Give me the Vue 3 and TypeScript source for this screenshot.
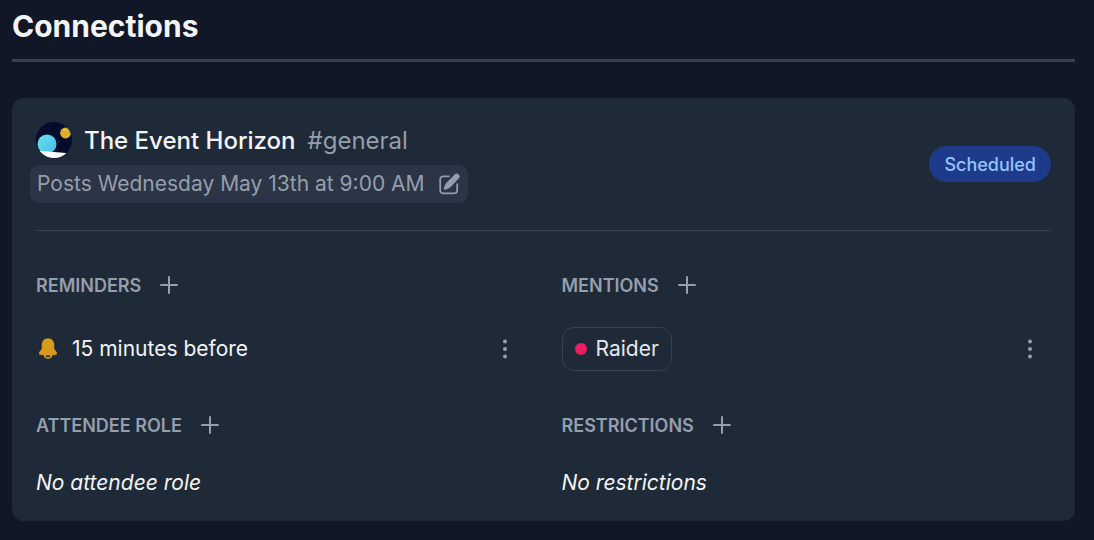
<script setup lang="ts">
interface Section {
  id: string
  title: string
  kind: 'reminder' | 'mention' | 'empty'
  text: string
}

const sections: Section[] = [
  { id: 'reminders', title: 'REMINDERS', kind: 'reminder', text: '15 minutes before' },
  { id: 'mentions', title: 'MENTIONS', kind: 'mention', text: 'Raider' },
  { id: 'attendee-role', title: 'ATTENDEE ROLE', kind: 'empty', text: 'No attendee role' },
  { id: 'restrictions', title: 'RESTRICTIONS', kind: 'empty', text: 'No restrictions' },
]
</script>

<template>
  <main class="page">
    <h1 class="title">Connections</h1>
    <article class="card">
      <header class="card-head">
        <div class="summary">
          <div class="server">
            <svg class="avatar" viewBox="0 0 36 36" aria-hidden="true">
              <defs>
                <clipPath id="avatar-clip"><circle cx="18" cy="18" r="18" /></clipPath>
                <linearGradient id="planet" x1="0" y1="0" x2="1" y2="1">
                  <stop offset="0" stop-color="#6be3f4" />
                  <stop offset="1" stop-color="#3fbfe3" />
                </linearGradient>
              </defs>
              <g clip-path="url(#avatar-clip)">
                <rect width="36" height="36" fill="#040c2c" />
                <circle cx="16" cy="2" r=".7" fill="#1b2a50" />
                <circle cx="23" cy="20" r="1" fill="#1c3157" />
                <circle cx="11" cy="22" r="9.5" fill="url(#planet)" />
                <path d="M5 20l5-4M9 26l7-7M14 28l3-4" stroke="#4cc9e2" stroke-width=".8" fill="none" />
                <circle cx="29.5" cy="11" r="5.4" fill="#dfae2b" />
                <path d="M27 8q3-2 5 1" stroke="#f0ca50" fill="none" />
                <path d="M0 28.500L36 31.500v5H0z" fill="#fff" />
              </g>
            </svg>
            <h2 class="server-name">The Event Horizon</h2>
            <span class="channel">#general</span>
          </div>
          <button class="schedule" type="button">
            <span>Posts Wednesday May 13th at 9:00 AM</span>
            <svg class="edit-icon" viewBox="0 0 24 24" aria-hidden="true">
              <path d="M12 4.300H6.200A3 3 0 0 0 3.200 7.300v11a3 3 0 0 0 3 3h11a3 3 0 0 0 3-3V12" fill="none" stroke="currentColor" stroke-width="1.700" stroke-linecap="round" />
              <path d="M21.700 2.500a2.900 2.900 0 0 0-4.100 0L9.800 10.400C8.200 12 7.400 14 6.800 16.700c-.2.800.3 1.200 1 1 2.600-.6 4.700-1.500 6.200-3l7.700-8.100a2.900 2.900 0 0 0 0-4.100z" fill="currentColor" />
            </svg>
          </button>
        </div>
        <span class="status">Scheduled</span>
      </header>

      <div class="sections">
        <section v-for="section in sections" :key="section.id" :aria-labelledby="section.id">
          <div class="section-head">
            <h3 :id="section.id" class="section-title">{{ section.title }}</h3>
            <button class="icon-button" type="button" :aria-label="`Add to ${section.title}`">
              <svg class="plus-icon" viewBox="0 0 24 24" aria-hidden="true">
                <path d="M12 4v16M4 12h16" stroke="currentColor" stroke-width="2" stroke-linecap="round" />
              </svg>
            </button>
          </div>
          <p v-if="section.kind === 'empty'" class="empty">{{ section.text }}</p>
          <div v-else class="entry">
            <div v-if="section.kind === 'reminder'" class="reminder">
              <svg class="bell-icon" viewBox="0 0 24 24" aria-hidden="true">
                <path fill-rule="evenodd" d="M12 1.200a6.200 6.200 0 0 0-6.200 6.200v3.100c0 1.400-.5 2.300-1.500 3.300C3.400 14.700 3 15.400 3 16.200c0 .9.600 1.400 1.500 1.600l3.100.4a4.500 4.500 0 0 0 8.800 0l3.100-.4c.9-.2 1.500-.7 1.500-1.600 0-.8-.4-1.500-1.300-2.400-1-1-1.500-1.900-1.500-3.300V7.400A6.200 6.200 0 0 0 12 1.200zM9.500 18.400c1.700.2 3.300.2 5 0a2.600 2.600 0 0 1-5 0z" fill="currentColor" />
              </svg>
              <span>{{ section.text }}</span>
            </div>
            <div v-else class="role"><i class="role-dot"></i><span>{{ section.text }}</span></div>
            <button class="icon-button menu" type="button" :aria-label="`${section.text} options`">
              <svg class="dots-icon" viewBox="0 0 24 24" aria-hidden="true">
                <g fill="currentColor">
                  <circle cx="12" cy="4.500" r="2" /><circle cx="12" cy="12" r="2" /><circle cx="12" cy="19.500" r="2" />
                </g>
              </svg>
            </button>
          </div>
        </section>
      </div>
    </article>
  </main>
</template>

<style>
body {
  margin: 0;
  background: #111726;
}
</style>

<style scoped>
.page {
  padding: 6px 19px 19px 12px;
  color: #f3f4f6;
  font-family: Inter, "Liberation Sans", sans-serif;
  font-size: 21px;
  line-height: 30px;
}
h1, h2, h3, p {
  margin: 0;
}
button {
  border: 0;
  background: none;
  color: #959eac;
  font: inherit;
  cursor: pointer;
}
svg {
  display: block;
  flex: none;
}
.title {
  padding-bottom: 12px;
  border-bottom: 3px solid #374151;
  font-size: 30px;
  line-height: 41px;
  font-weight: 700;
}
.card {
  margin-top: 36px;
  padding: 24px;
  border-radius: 12px;
  background: #1f2a38;
}
.card-head {
  display: flex;
  align-items: center;
  justify-content: space-between;
  padding-bottom: 24px;
  border-bottom: 1px solid #374151;
}
.server {
  display: flex;
  align-items: flex-start;
  gap: 12px;
  font-size: 24px;
  line-height: 38px;
}
.avatar {
  width: 36px;
  height: 36px;
}
.server-name {
  font-size: 24px;
  font-weight: 500;
}
.channel {
  color: #959eac;
}
.schedule {
  display: flex;
  align-items: center;
  gap: 12px;
  margin: 5px 0 3px -6px;
  padding: 4px 7px;
  border-radius: 9px;
  background: #2b3546;
}
.edit-icon {
  width: 24px;
  height: 24px;
}
.status {
  padding: 5px 15px 3px;
  border-radius: 18px;
  background: #1e3a8a;
  color: #93c5fd;
  font-size: 18px;
  line-height: 28px;
  font-weight: 500;
}
.sections {
  display: grid;
  grid-template-columns: 1fr 1fr;
  gap: 36px;
  margin-top: 36px;
}
.section-head {
  display: flex;
  align-items: center;
  gap: 10px;
  height: 36px;
  margin-bottom: 24px;
  color: #959eac;
}
.section-title {
  padding-top: 2px;
  font-size: 18px;
  font-weight: 600;
}
.icon-button {
  padding: 6px;
}
.plus-icon {
  width: 24px;
  height: 24px;
}
.entry {
  display: flex;
  align-items: center;
  justify-content: space-between;
  min-height: 44px;
}
.reminder {
  display: flex;
  align-items: center;
  gap: 12px;
}
.bell-icon {
  width: 24px;
  height: 24px;
  color: #d69a1c;
}
.role {
  display: flex;
  align-items: center;
  gap: 9px;
  padding: 6px 12px;
  border: 1px solid #374151;
  border-radius: 12px;
  color: #e5e7eb;
}
.role-dot {
  width: 12px;
  height: 12px;
  border-radius: 50%;
  background: #e91e63;
}
.menu {
  margin-right: 3px;
}
.dots-icon {
  width: 24px;
  height: 24px;
}
.empty {
  line-height: 32px;
  margin-bottom: -2px;
  font-style: italic;
}
</style>
